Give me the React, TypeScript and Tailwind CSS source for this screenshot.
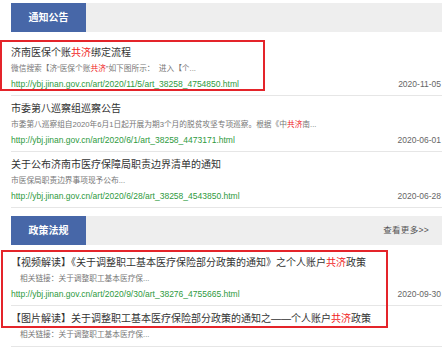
import React from "react";

type Item = {
    title: React.ReactNode;
    desc: React.ReactNode;
    url?: string;
    date?: string;
    indent?: boolean;
};

const Hi = ({ children }: { children: React.ReactNode }) => (
    <span className="text-[#f01c1c]">{children}</span>
);

const notices: Item[] = [
    {
        title: <>济南医保个账<Hi>共济</Hi>绑定流程</>,
        desc: <>微信搜索【济“医保个账<Hi>共济</Hi>”如下图所示：&nbsp;&nbsp;进入【个...</>,
        url: "http://ybj.jinan.gov.cn/art/2020/11/5/art_38258_4754850.html",
        date: "2020-11-05",
    },
    {
        title: "市委第八巡察组巡察公告",
        desc: <>市委第八巡察组自2020年6月1日起开展为期3个月的脱贫攻坚专项巡察。根据《中<Hi>共济</Hi>南...</>,
        url: "http://ybj.jinan.gov.cn/art/2020/6/1/art_38258_4473171.html",
        date: "2020-06-01",
    },
    {
        title: "关于公布济南市医疗保障局职责边界清单的通知",
        desc: "市医保局职责边界事项现予公布...",
        url: "http://ybj.jinan.gov.cn/art/2020/6/28/art_38258_4543850.html",
        date: "2020-06-28",
    },
];

const policies: Item[] = [
    {
        title: <>【视频解读】《关于调整职工基本医疗保险部分政策的通知》之个人账户<Hi>共济</Hi>政策</>,
        desc: "相关链接：关于调整职工基本医疗保...",
        url: "http://ybj.jinan.gov.cn/art/2020/9/30/art_38276_4755665.html",
        date: "2020-09-30",
        indent: true,
    },
    {
        title: <>【图片解读】关于调整职工基本医疗保险部分政策的通知之——个人账户<Hi>共济</Hi>政策</>,
        desc: "相关链接：关于调整职工基本医疗保...",
        indent: true,
    },
];

function SectionHeader({ label, more }: { label: string; more?: boolean }) {
    return (
        <div className="flex h-[29px] items-center justify-between bg-[#eeeeee]">
            <div className="flex h-full w-[75px] items-center justify-center bg-[#4767a8] text-[10px] font-bold text-white">
                {label}
            </div>
            {more && (
                <div className="pr-[13px] text-[8.5px] tracking-[0.3px] text-[#555555]">查看更多&gt;&gt;</div>
            )}
        </div>
    );
}

function Row({ item }: { item: Item }) {
    return (
        <div className="border-b border-[#e6e6e6] pt-[6px] pb-[5px]">
            <div className="whitespace-nowrap text-[10px] leading-[14px] text-[#333333]">{item.title}</div>
            <div className={"mt-[3px] whitespace-nowrap text-[7.7px] leading-[12px] text-[#777777] " + (item.indent ? "pl-[9px]" : "")}>
                {item.desc}
            </div>
            {item.url && (
                <div className="mt-[3px] flex items-center justify-between text-[8.5px] leading-[12px]">
                    <span className="text-[#2e9a40]">{item.url}</span>
                    <span className="pr-[1px] text-[#666666]">{item.date}</span>
                </div>
            )}
        </div>
    );
}

export default function App() {
    return (
        <div className="relative h-[347px] w-[442px] overflow-hidden bg-white font-['Liberation_Sans','Noto_Sans_CJK_SC',sans-serif]">
            <div className="pl-[11px] pt-[3px]">
                <SectionHeader label="通知公告" />
                <div className="mt-[8px]">
                    {notices.map((n, i) => (
                        <Row key={i} item={n} />
                    ))}
                </div>
                <div className="mt-[8px]">
                    <SectionHeader label="政策法规" more />
                </div>
                <div className="mt-[5px]">
                    {policies.map((n, i) => (
                        <Row key={i} item={n} />
                    ))}
                </div>
            </div>

            {/* highlight boxes */}
            <div className="pointer-events-none absolute left-0 top-[40px] h-[51px] w-[265px] border-2 border-[#e4242a]"></div>
            <div className="pointer-events-none absolute left-[1px] top-[250px] h-[78px] w-[387px] border-2 border-[#e4242a]"></div>
        </div>
    );
}
